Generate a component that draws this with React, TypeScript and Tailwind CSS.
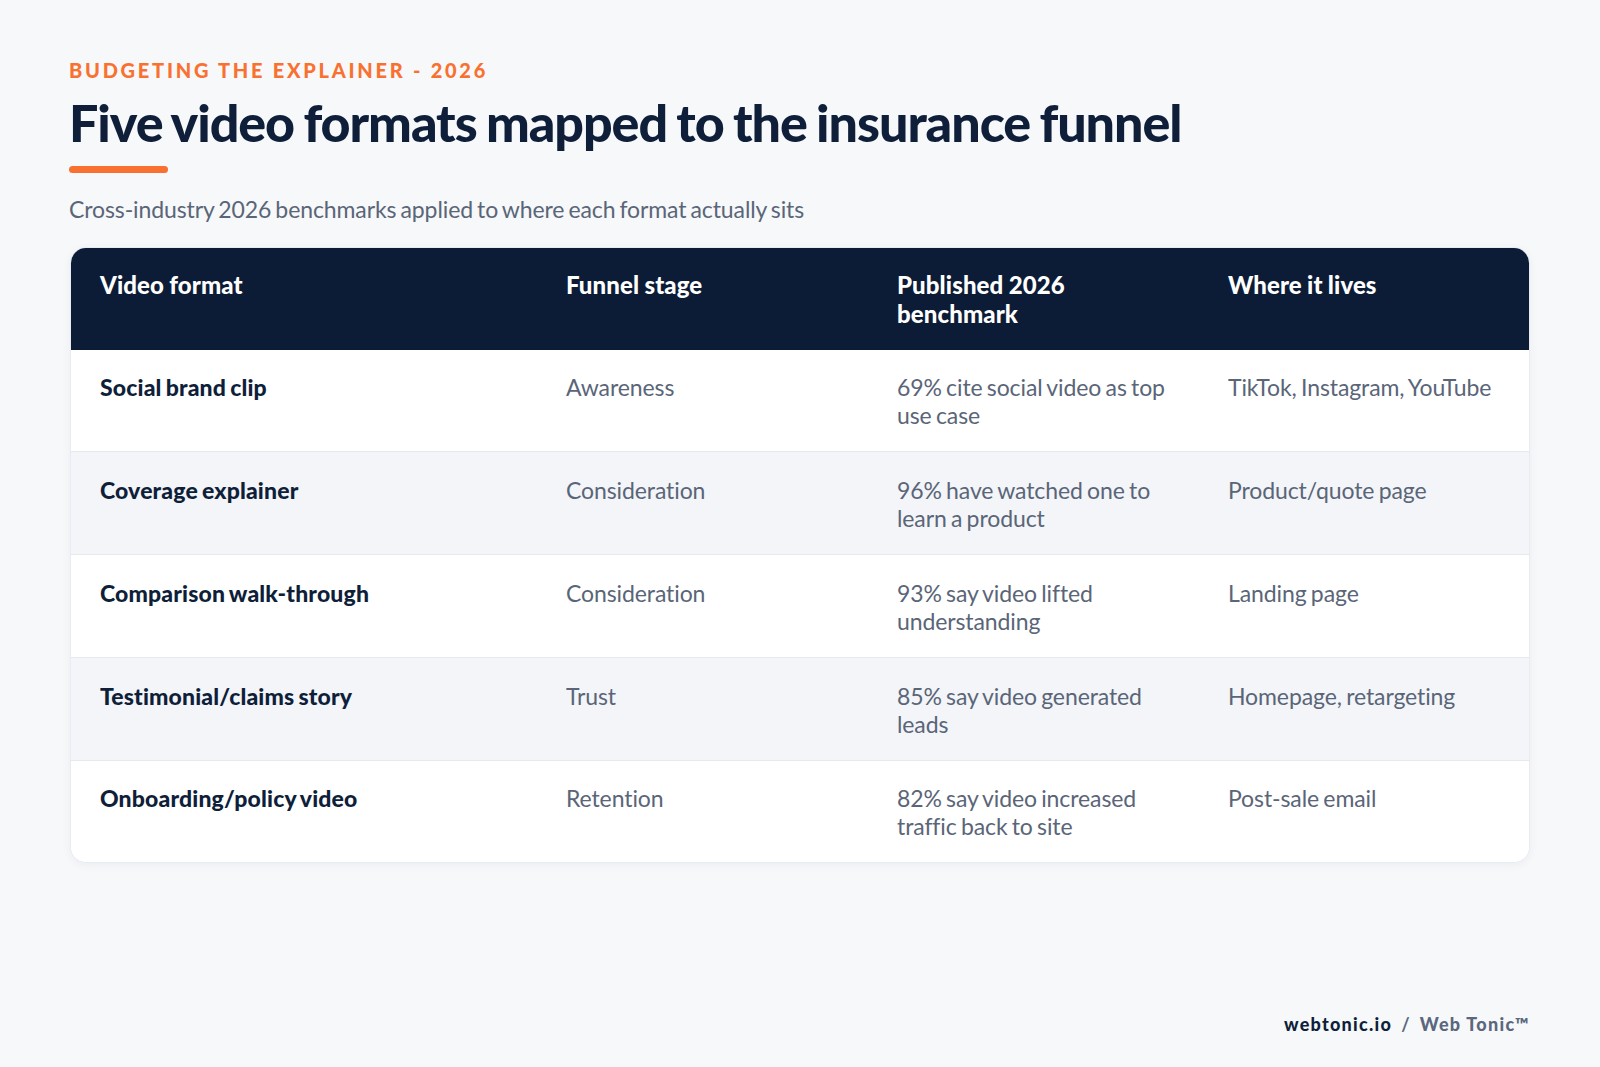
import React from 'react';

const rows = [
  ['Social brand clip', 'Awareness', '69% cite social video as top use case', 'TikTok, Instagram, YouTube'],
  ['Coverage explainer', 'Consideration', '96% have watched one to learn a product', 'Product/quote page'],
  ['Comparison walk-through', 'Consideration', '93% say video lifted understanding', 'Landing page'],
  ['Testimonial/claims story', 'Trust', '85% say video generated leads', 'Homepage, retargeting'],
  ['Onboarding/policy video', 'Retention', '82% say video increased traffic back to site', 'Post-sale email'],
];

const App: React.FC = () => {
  return (
    <div className="w-[1600px] h-[1067px] bg-[#f6f8fa] pl-[69px] pr-[70px] pt-[57px] flex flex-col font-['Lato',sans-serif]">
      <div className="text-[20px] leading-[26px] font-black tracking-[2.74px] text-[#f97130]">BUDGETING THE EXPLAINER - 2026</div>
      <h1 className="mt-[8px] text-[52px] leading-[62px] font-black tracking-[-1.05px] [word-spacing:-2px] text-[#0f1f3a]">Five video formats mapped to the insurance funnel</h1>
      <div className="mt-[13px] w-[99px] h-[7px] rounded-full bg-[#f97130]" />
      <p className="mt-[21px] text-[23px] leading-[30px] tracking-[-0.1px] [word-spacing:-1.7px] text-[#5a6578]">Cross-industry 2026 benchmarks applied to where each format actually sits</p>
      <div className="mt-[23px] ml-[1px] rounded-[16px] overflow-hidden bg-white border border-[#e8ebf0] shadow-[0_2px_10px_rgba(15,31,58,0.05)]">
        <div className="grid grid-cols-[465px_331px_331px_1fr] bg-[#0c1c36] text-white text-[24px] leading-[29px] font-black tracking-[0.1px] [word-spacing:-0.5px]">
          <div className="pl-[29px] pr-[30px] pt-[22px] pb-[21.5px]">Video format</div>
          <div className="px-[30px] pt-[22px] pb-[21.5px]">Funnel stage</div>
          <div className="px-[30px] pt-[22px] pb-[21.5px]">Published 2026 benchmark</div>
          <div className="pl-[30px] pt-[22px] pb-[21.5px]">Where it lives</div>
        </div>
        {rows.map((r, i) => (
          <div key={r[0]} className={`grid grid-cols-[465px_331px_331px_1fr] text-[23px] leading-[28px] tracking-[-0.1px] [word-spacing:-1.5px] ${i % 2 === 1 ? 'bg-[#f3f5f9]' : 'bg-white'} ${i < rows.length - 1 ? 'border-b border-[#e6e9ee]' : ''}`}>
            <div className="pl-[29px] pr-[30px] pt-[23.8px] pb-[22px] font-black text-[#0f1f3a] tracking-[0.15px]">{r[0]}</div>
            <div className="px-[30px] pt-[23.8px] pb-[22px] text-[#5a6578]">{r[1]}</div>
            <div className="px-[30px] pt-[23.8px] pb-[22px] text-[#5a6578]">{r[2]}</div>
            <div className="pl-[30px] pt-[23.8px] pb-[22px] text-[#5a6578]">{r[3]}</div>
          </div>
        ))}
      </div>
      <div className="mt-auto mb-[30px] self-end text-[18px] leading-[26px] font-black tracking-[0.07em] text-[#5a677d]">
        <span className="text-[#0f1f3a]">webtonic.io</span>
        <span className="font-bold mx-[9px]">/</span>
        <span>Web Tonic™</span>
      </div>
    </div>
  );
};

export default App;
